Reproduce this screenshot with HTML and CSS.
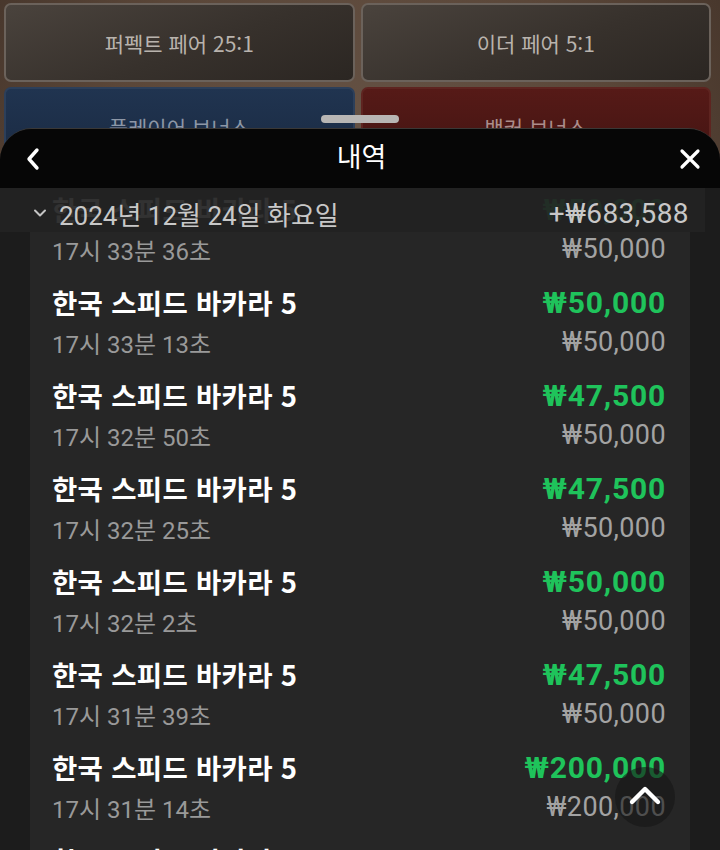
FILE: index.html
```html
<!DOCTYPE html>
<html lang="ko">
<head>
    <meta charset="UTF-8">
    <meta name="viewport" content="width=device-width, initial-scale=1.0">
    <title>내역</title>
    <link rel="stylesheet" href="styles.css">
</head>
<body>
    <div class="table-bets">
        <div class="bet bet-plain">퍼펙트 페어 25:1</div>
        <div class="bet bet-plain">이더 페어 5:1</div>
        <div class="bet bet-blue">플레이어 보너스</div>
        <div class="bet bet-red">뱅커 보너스</div>
    </div>

    <div class="handle"></div>

    <div class="sheet">
        <div class="sheet-header">
            <button class="icon-btn" aria-label="뒤로">
                <svg width="16" height="24" viewBox="0 0 16 24"><path d="M12 3 L4 12 L12 21" fill="none" stroke="#fff" stroke-width="3.4" stroke-linecap="round" stroke-linejoin="round"/></svg>
            </button>
            <div class="sheet-title">내역</div>
            <button class="icon-btn" aria-label="닫기">
                <svg width="22" height="22" viewBox="0 0 22 22"><path d="M3 3 L19 19 M19 3 L3 19" fill="none" stroke="#fff" stroke-width="3.2" stroke-linecap="round"/></svg>
            </button>
        </div>

        <div class="sheet-body">
            <div class="history">
                <div class="row">
                    <div class="row-line"><span class="game">한국 스피드 바카라 5</span><span class="win">₩50,000</span></div>
                    <div class="row-line"><span class="time">17시 33분 36초</span><span class="bet-amount">₩50,000</span></div>
                </div>
                <div class="row">
                    <div class="row-line"><span class="game">한국 스피드 바카라 5</span><span class="win">₩50,000</span></div>
                    <div class="row-line"><span class="time">17시 33분 13초</span><span class="bet-amount">₩50,000</span></div>
                </div>
                <div class="row">
                    <div class="row-line"><span class="game">한국 스피드 바카라 5</span><span class="win">₩47,500</span></div>
                    <div class="row-line"><span class="time">17시 32분 50초</span><span class="bet-amount">₩50,000</span></div>
                </div>
                <div class="row">
                    <div class="row-line"><span class="game">한국 스피드 바카라 5</span><span class="win">₩47,500</span></div>
                    <div class="row-line"><span class="time">17시 32분 25초</span><span class="bet-amount">₩50,000</span></div>
                </div>
                <div class="row">
                    <div class="row-line"><span class="game">한국 스피드 바카라 5</span><span class="win">₩50,000</span></div>
                    <div class="row-line"><span class="time">17시 32분 2초</span><span class="bet-amount">₩50,000</span></div>
                </div>
                <div class="row">
                    <div class="row-line"><span class="game">한국 스피드 바카라 5</span><span class="win">₩47,500</span></div>
                    <div class="row-line"><span class="time">17시 31분 39초</span><span class="bet-amount">₩50,000</span></div>
                </div>
                <div class="row">
                    <div class="row-line"><span class="game">한국 스피드 바카라 5</span><span class="win">₩200,000</span></div>
                    <div class="row-line"><span class="time">17시 31분 14초</span><span class="bet-amount">₩200,000</span></div>
                </div>
                <div class="row">
                    <div class="row-line"><span class="game">한국 스피드 바카라 5</span><span class="win">₩100,000</span></div>
                    <div class="row-line"><span class="time">17시 30분 51초</span><span class="bet-amount">₩100,000</span></div>
                </div>
            </div>

            <div class="date-row">
                <span class="date">
                    <svg width="14" height="10" viewBox="0 0 14 10"><path d="M2 2.5 L7 7.5 L12 2.5" fill="none" stroke="#c4c4c4" stroke-width="2" stroke-linecap="round" stroke-linejoin="round"/></svg>
                    2024년 12월 24일 화요일
                </span>
                <span class="total">+₩683,588</span>
            </div>

            <button class="to-top" aria-label="맨 위로">
                <svg width="34" height="22" viewBox="0 0 34 22"><path d="M4 18 L17 5 L30 18" fill="none" stroke="#fff" stroke-width="4.4" stroke-linecap="round" stroke-linejoin="round"/></svg>
            </button>
        </div>
    </div>
</body>
</html>
```

FILE: styles.css
```css
html, body {
    margin: 0;
    height: 850px;
    overflow: hidden;
}
body {
    position: relative;
    font-family: Roboto, 'Noto Sans CJK KR', sans-serif;
    background: radial-gradient(ellipse at 50% 40%, #6e5c4f 0%, #5a4638 60%, #3e2f26 100%);
}
.table-bets {
    display: grid;
    grid-template-columns: 1fr 1fr;
    gap: 5px 6px;
    padding: 3px 9px 0 4px;
}
.bet {
    height: 75px;
    border-radius: 7px;
    display: flex;
    align-items: center;
    justify-content: center;
    font-size: 21px;
    color: #b9b3ad;
    font-family: 'Noto Sans CJK KR', Roboto, sans-serif;
}
.bet-plain {
    background: linear-gradient(160deg, #4a433d 0%, #37312c 55%, #2b2622 100%);
    border: 2px solid #6b625b;
}
.bet-blue {
    background: linear-gradient(180deg, #203450 0%, #1a2a42 100%);
    border: 2px solid #2c3f5a;
    color: #8d97a6;
}
.bet-red {
    background: linear-gradient(180deg, #561a17 0%, #421412 100%);
    border: 2px solid #5e2420;
    color: #ab8e8c;
}
.handle {
    position: absolute;
    top: 115px;
    left: 321px;
    width: 78px;
    height: 8px;
    border-radius: 4px;
    background: #b8b6b4;
}
.sheet {
    position: absolute;
    top: 128px;
    left: 0;
    right: 0;
    bottom: 0;
    border-radius: 32px 32px 0 0;
    border-top: 1px solid #3a3836;
    background: #1c1c1c;
    overflow: hidden;
    display: flex;
    flex-direction: column;
}
.sheet-header {
    height: 59px;
    flex-shrink: 0;
    background: #060606;
    display: flex;
    align-items: center;
    justify-content: space-between;
    padding: 0 17px 0 20px;
}
.icon-btn {
    background: none;
    border: none;
    padding: 0;
    width: 26px;
    height: 26px;
    display: flex;
    align-items: center;
    justify-content: center;
}
.sheet-title {
    color: #fff;
    font-size: 27px;
    font-family: 'Noto Sans CJK KR', sans-serif;
    margin-bottom: 6px;
}
.sheet-body {
    position: relative;
    flex: 1;
    overflow: hidden;
}
.history {
    margin: -4px 30px 0;
    background: #262626;
}
.row {
    padding: 7px 24px 6px 22px;
}
.history .row:first-child {
    padding-top: 5px;
}
.row-line {
    display: flex;
    justify-content: space-between;
    align-items: center;
    height: 40px;
}
.game {
    color: #fff;
    font-size: 27.5px;
    font-weight: 700;
    font-family: 'Noto Sans CJK KR', sans-serif;
    letter-spacing: 0.3px;
}
.win {
    color: #1fc35b;
    font-size: 30px;
    font-weight: 700;
    letter-spacing: 0.8px;
}
.time {
    color: #999;
    font-size: 24px;
}
.bet-amount {
    color: #a3a3a3;
    font-size: 27px;
    letter-spacing: 0.4px;
}
.date-row {
    position: absolute;
    top: 0;
    left: 0;
    right: 15px;
    height: 44px;
    box-sizing: border-box;
    padding: 6px 16px 0 33px;
    background: rgba(34, 34, 34, 0.93);
    display: flex;
    align-items: center;
    justify-content: space-between;
    color: #c8c8c8;
}
.date {
    display: flex;
    align-items: center;
    gap: 12px;
    font-size: 26px;
}
.total {
    font-size: 28px;
    letter-spacing: 0.4px;
}
.to-top {
    position: absolute;
    left: 615px;
    top: 579px;
    width: 60px;
    height: 60px;
    border-radius: 50%;
    border: none;
    background: rgba(22, 22, 22, 0.6);
    display: flex;
    align-items: center;
    justify-content: center;
    padding: 0 0 4px;
}
```
